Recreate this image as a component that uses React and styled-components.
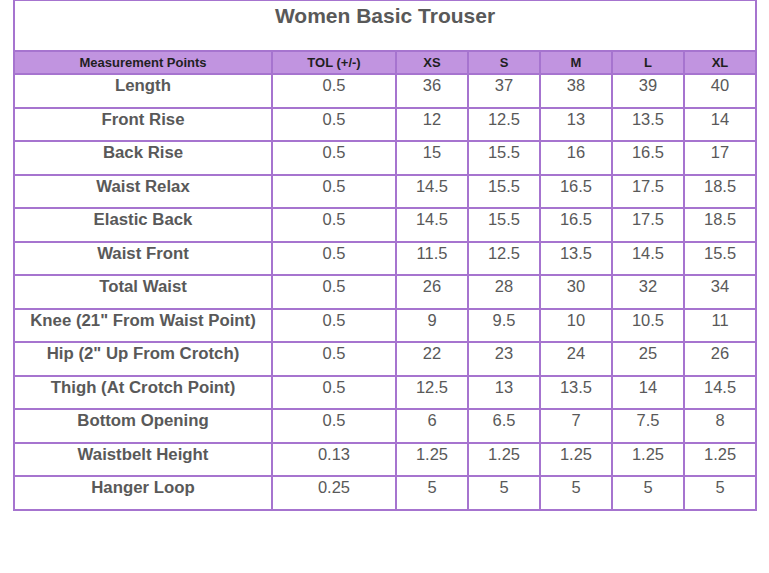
import React from "react";
import styled, { createGlobalStyle } from "styled-components";

const GlobalStyle = createGlobalStyle`
  html, body {
    margin: 0;
    padding: 0;
    background: #ffffff;
  }
`;

const sizes = ["XS", "S", "M", "L", "XL"];

const rows = [
  ["Length", "0.5", "36", "37", "38", "39", "40"],
  ["Front Rise", "0.5", "12", "12.5", "13", "13.5", "14"],
  ["Back Rise", "0.5", "15", "15.5", "16", "16.5", "17"],
  ["Waist Relax", "0.5", "14.5", "15.5", "16.5", "17.5", "18.5"],
  ["Elastic Back", "0.5", "14.5", "15.5", "16.5", "17.5", "18.5"],
  ["Waist Front", "0.5", "11.5", "12.5", "13.5", "14.5", "15.5"],
  ["Total Waist", "0.5", "26", "28", "30", "32", "34"],
  ["Knee (21\" From Waist Point)", "0.5", "9", "9.5", "10", "10.5", "11"],
  ["Hip (2\" Up From Crotch)", "0.5", "22", "23", "24", "25", "26"],
  ["Thigh (At Crotch Point)", "0.5", "12.5", "13", "13.5", "14", "14.5"],
  ["Bottom Opening", "0.5", "6", "6.5", "7", "7.5", "8"],
  ["Waistbelt Height", "0.13", "1.25", "1.25", "1.25", "1.25", "1.25"],
  ["Hanger Loop", "0.25", "5", "5", "5", "5", "5"],
];

const Page = styled.div`
  padding: 0 0 0 13px;
`;

const Chart = styled.table`
  border-collapse: collapse;
  table-layout: fixed;
  width: 744px;
  font-family: "Liberation Sans", Arial, sans-serif;
`;

const TitleCell = styled.th`
  border: 2px solid #a674cf;
  border-top-width: 1px;
  height: 46px;
  padding: 3px 0 0;
  vertical-align: top;
  text-align: center;
  font-size: 21px;
  font-weight: bold;
  color: #595959;
`;

const HeadCell = styled.th`
  border: 2px solid #a674cf;
  background: #c194e0;
  height: 21px;
  padding: 0;
  font-size: 13px;
  font-weight: bold;
  color: #1f1f1f;
  text-align: center;
  vertical-align: middle;
`;

const Cell = styled.td`
  border: 2px solid #a674cf;
  height: 30.5px;
  padding: 1px 0 0;
  vertical-align: top;
  text-align: center;
  font-size: ${({ $label }) => ($label ? "16.8px" : "16.5px")};
  font-weight: ${({ $label }) => ($label ? "bold" : "normal")};
  color: #595959;
  line-height: 19px;
`;

export default function App() {
  return (
    <Page>
      <GlobalStyle />
      <Chart>
        <colgroup>
          <col style={{ width: 258 }} />
          <col style={{ width: 124 }} />
          {sizes.map((s) => (
            <col key={s} style={{ width: 72 }} />
          ))}
        </colgroup>
        <thead>
          <tr>
            <TitleCell colSpan={7}>Women Basic Trouser</TitleCell>
          </tr>
          <tr>
            <HeadCell>Measurement Points</HeadCell>
            <HeadCell>TOL (+/-)</HeadCell>
            {sizes.map((s) => (
              <HeadCell key={s}>{s}</HeadCell>
            ))}
          </tr>
        </thead>
        <tbody>
          {rows.map((r) => (
            <tr key={r[0]}>
              {r.map((v, i) => (
                <Cell key={i} $label={i === 0}>
                  {v}
                </Cell>
              ))}
            </tr>
          ))}
        </tbody>
      </Chart>
    </Page>
  );
}
